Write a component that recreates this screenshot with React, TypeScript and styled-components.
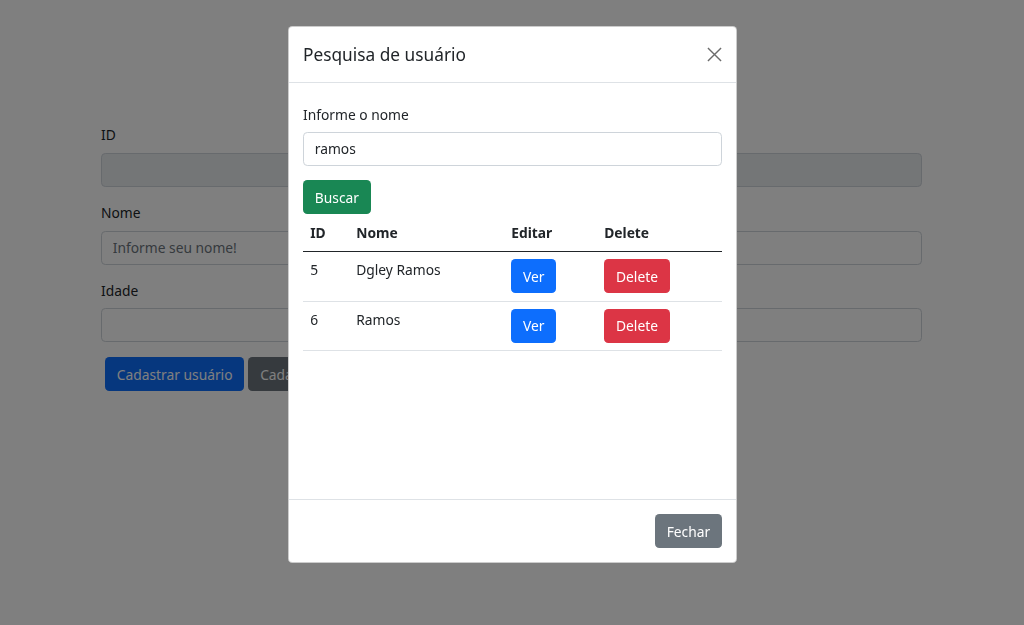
import React from "react";
import styled, { createGlobalStyle } from "styled-components";

const Global = createGlobalStyle`
  html, body { margin: 0; padding: 0; }
  body {
    font-family: "Noto Sans", "Open Sans", Arial, sans-serif;
    font-size: 13.8px;
    line-height: 1.5;
    color: #212529;
    background: #fff;
    width: 1024px;
    height: 625px;
    overflow: hidden;
  }
  * { box-sizing: border-box; }
`;

const Page = styled.div`
  width: 821px;
  margin-left: 101px;
  padding-top: 124px;
  display: flex;
  flex-direction: column;
`;

const Field = styled.div`
  display: flex;
  flex-direction: column;
  margin-bottom: 15px;
`;

const Label = styled.label`
  display: block;
  margin-bottom: 7.2px;
  line-height: 21.6px;
`;

const Input = styled.input<{ $disabled?: boolean }>`
  display: block;
  width: 100%;
  height: 34px;
  padding: 5.4px 10.8px;
  font: inherit;
  color: #212529;
  background: ${(p) => (p.$disabled ? "#e9ecef" : "#fff")};
  border: 1px solid #ced4da;
  border-radius: 4.3px;
  outline: none;
  &::placeholder { color: #6c757d; }
`;

const ButtonRow = styled.div`
  display: flex;
  gap: 4px;
  padding-left: 4px;
`;

const Btn = styled.button<{ $variant: "primary" | "secondary" | "success" | "danger" }>`
  font: inherit;
  line-height: 21.6px;
  height: 34px;
  padding: 5.4px 10.8px;
  border: 1px solid transparent;
  border-radius: 4.3px;
  color: #fff;
  cursor: pointer;
  white-space: nowrap;
  background: ${(p) =>
    p.$variant === "primary"
      ? "#0d6efd"
      : p.$variant === "secondary"
      ? "#6c757d"
      : p.$variant === "success"
      ? "#198754"
      : "#dc3545"};
`;

const Backdrop = styled.div`
  position: fixed;
  inset: 0;
  background: rgba(0, 0, 0, 0.5);
`;

const ModalWrap = styled.div`
  position: fixed;
  inset: 0;
  display: flex;
  justify-content: flex-start;
  align-items: flex-start;
  padding-top: 26px;
  padding-left: 288px;
`;

const Modal = styled.div`
  width: 449px;
  background: #fff;
  border: 1px solid rgba(0, 0, 0, 0.2);
  border-radius: 4.3px;
  display: flex;
  flex-direction: column;
`;

const Header = styled.div`
  display: flex;
  align-items: center;
  justify-content: space-between;
  padding: 14px;
  border-bottom: 1px solid #dee2e6;
  height: 56px;
`;

const Title = styled.h5`
  margin: 0;
  font-size: 17.3px;
  font-weight: 400;
  line-height: 27px;
`;

const Close = styled.button`
  width: 16px;
  height: 16px;
  padding: 0;
  border: 0;
  background: transparent;
  display: flex;
  align-items: center;
  justify-content: center;
  cursor: pointer;
`;

const Body = styled.div`
  height: 416px;
  padding: 21px 14px 14px;
  display: flex;
  flex-direction: column;
  align-items: flex-start;
`;

const FullField = styled(Field)`
  width: 100%;
  margin-bottom: 14.4px;
`;

const BodyLabel = styled(Label)`
  margin-bottom: 6.2px;
`;

const Table = styled.table`
  width: 100%;
  border-collapse: collapse;
  margin-top: 1px;
`;

const Th = styled.th<{ $w: number }>`
  width: ${(p) => p.$w}px;
  text-align: left;
  font-weight: 700;
  padding: 7.2px 7.2px;
  line-height: 21.6px;
  border-bottom: 1px solid #212529;
`;

const Td = styled.td`
  padding: 7.2px 7.2px;
  line-height: 21.6px;
  vertical-align: top;
  border-bottom: 1px solid #dee2e6;
`;

const Footer = styled.div`
  display: flex;
  justify-content: flex-end;
  padding: 14.4px 14px 13.4px;
  border-top: 1px solid #dee2e6;
`;

const rows = [
  { id: 5, nome: "Dgley Ramos" },
  { id: 6, nome: "Ramos" },
];

export default function App() {
  return (
    <>
      <Global />
      <Page>
        <Field>
          <Label>ID</Label>
          <Input $disabled disabled />
        </Field>
        <Field>
          <Label>Nome</Label>
          <Input placeholder="Informe seu nome!" />
        </Field>
        <Field>
          <Label>Idade</Label>
          <Input />
        </Field>
        <ButtonRow>
          <Btn $variant="primary">Cadastrar usuário</Btn>
          <Btn $variant="secondary">Cadastrar</Btn>
        </ButtonRow>
      </Page>
      <Backdrop />
      <ModalWrap>
        <Modal>
          <Header>
            <Title>Pesquisa de usuário</Title>
            <Close aria-label="Close">
              <svg width="15" height="15" viewBox="0 0 16 16">
                <path d="M1 1L15 15M15 1L1 15" stroke="#6b6b6b" strokeWidth="1.5" fill="none" />
              </svg>
            </Close>
          </Header>
          <Body>
            <FullField>
              <BodyLabel>Informe o nome</BodyLabel>
              <Input defaultValue="ramos" />
            </FullField>
            <Btn $variant="success">Buscar</Btn>
            <Table>
              <thead>
                <tr>
                  <Th $w={46}>ID</Th>
                  <Th $w={155}>Nome</Th>
                  <Th $w={93}>Editar</Th>
                  <Th $w={125}>Delete</Th>
                </tr>
              </thead>
              <tbody>
                {rows.map((r) => (
                  <tr key={r.id}>
                    <Td>{r.id}</Td>
                    <Td>{r.nome}</Td>
                    <Td>
                      <Btn $variant="primary">Ver</Btn>
                    </Td>
                    <Td>
                      <Btn $variant="danger">Delete</Btn>
                    </Td>
                  </tr>
                ))}
              </tbody>
            </Table>
          </Body>
          <Footer>
            <Btn $variant="secondary">Fechar</Btn>
          </Footer>
        </Modal>
      </ModalWrap>
    </>
  );
}
